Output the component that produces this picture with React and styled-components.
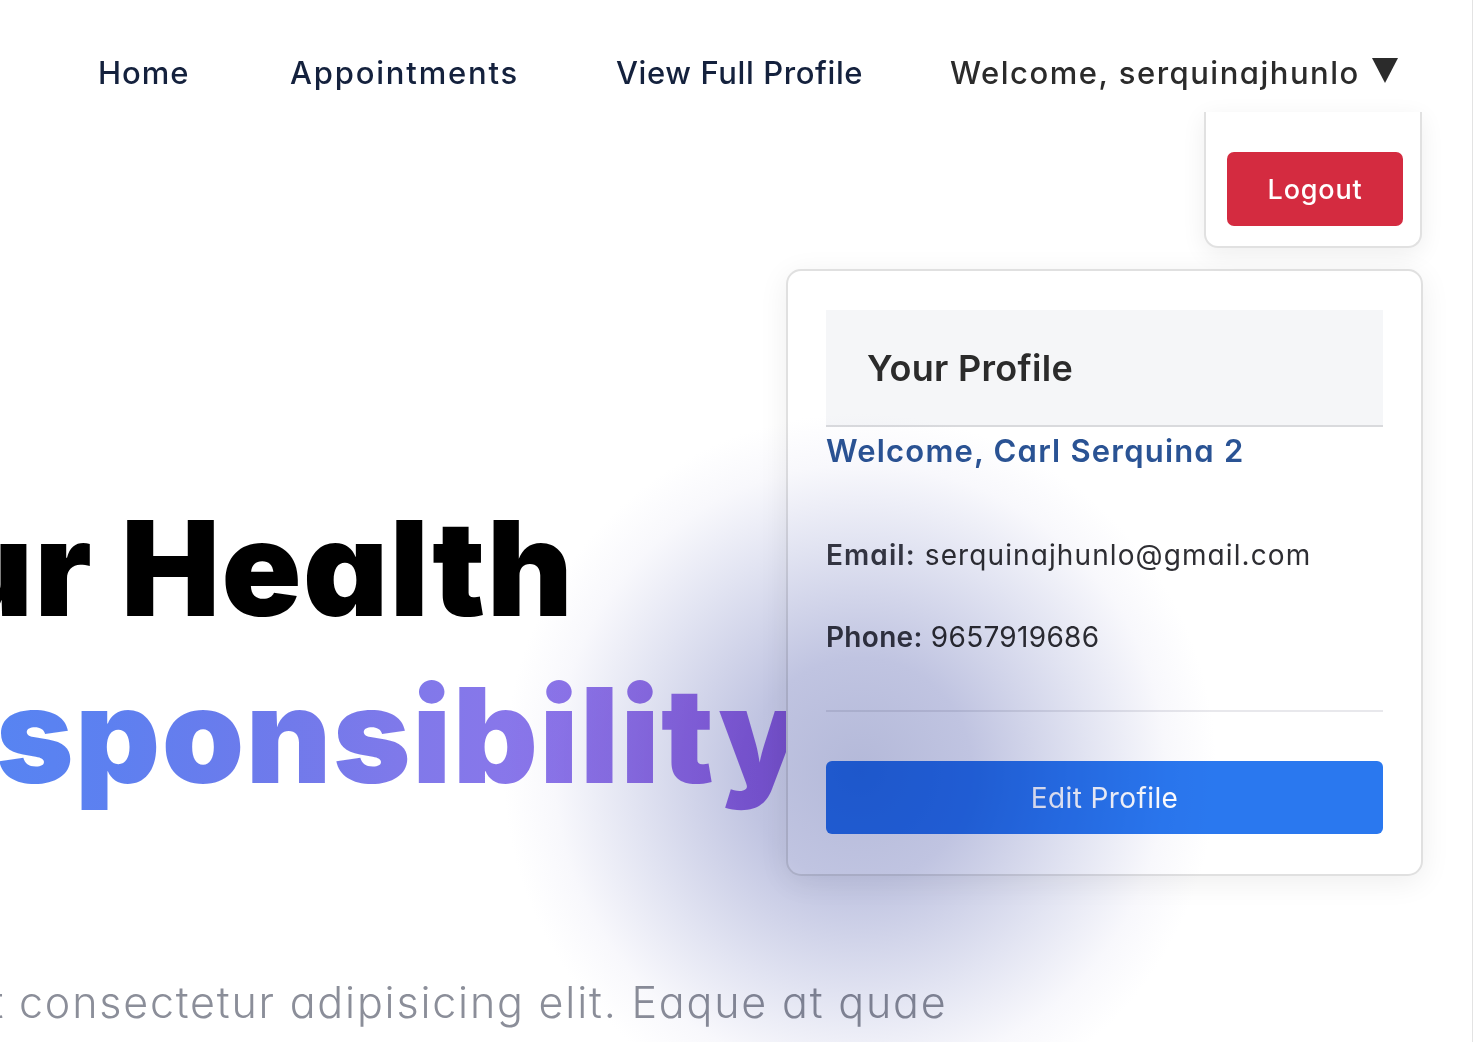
import React from "react";
import styled, { createGlobalStyle } from "styled-components";

const GlobalStyle = createGlobalStyle`
  html, body {
    margin: 0;
    padding: 0;
    background: #ffffff;
  }
  body {
    font-family: Inter, "Noto Sans", "Liberation Sans", sans-serif;
    font-feature-settings: "cv11" 1;
    overflow: hidden;
  }
  * { box-sizing: border-box; }
`;

const Frame = styled.div`
  position: relative;
  width: 1473px;
  height: 1042px;
  border-right: 1px solid #e3e3e3;
  background: #ffffff;
  overflow: hidden;
`;

const Header = styled.header`
  position: relative;
  z-index: 3;
  height: 112px;
  padding-top: 32px;
  display: flex;
  align-items: center;
  background: #ffffff;
`;

const Nav = styled.nav`
  display: grid;
  grid-template-columns: 192px 326px 334px auto;
  align-items: center;
  padding-left: 98px;
`;

const NavLink = styled.a`
  font-size: 31px;
  font-weight: 500;
  color: #14213d;
  text-decoration: none;
  white-space: nowrap;
  letter-spacing: ${(p) => p.$spacing ?? 1}px;
`;

const UserToggle = styled.button`
  display: flex;
  align-items: center;
  gap: 12px;
  padding: 0;
  border: 0;
  background: none;
  font-family: inherit;
  font-feature-settings: inherit;
  font-size: 31px;
  font-weight: 500;
  color: #2b2b2b;
  white-space: nowrap;
  letter-spacing: 1.5px;
  cursor: pointer;
`;

const Caret = styled.svg`
  width: 26px;
  height: 26px;
  margin-top: -4px;
  fill: #2b2b2b;
`;

const Dropdown = styled.div`
  position: absolute;
  top: 100%;
  right: 50px;
  width: 218px;
  padding: 40px 20px 20px 21px;
  background: #ffffff;
  border: 2px solid #e1e1e1;
  border-top: 0;
  border-radius: 0 0 14px 14px;
  box-shadow: 0 6px 24px rgba(0, 0, 0, 0.07);
`;

const LogoutButton = styled.button`
  display: block;
  width: 176px;
  height: 74px;
  border: 0;
  border-radius: 7px;
  background: #d42b40;
  color: #ffffff;
  font-family: inherit;
  font-feature-settings: inherit;
  font-size: 27px;
  font-weight: 500;
  letter-spacing: 0.8px;
  cursor: pointer;
`;

const Main = styled.main`
  display: grid;
  grid-template-columns: 786px 637px;
`;

const Hero = styled.section`
  position: relative;
  z-index: 1;
  min-width: 0;
  padding-top: 373px;
  white-space: nowrap;
`;

const Title = styled.h1`
  margin: 0;
  font-size: 132px;
  font-weight: 900;
  line-height: 167px;
  letter-spacing: 1.5px;
`;

const TitleLine = styled.span`
  display: flex;
  color: #000000;
`;

const Lead = styled.span`
  flex: 0 0 ${(p) => p.$x}px;
  min-width: 0;
  display: flex;
  justify-content: flex-end;
  white-space: pre;
`;

const GradientText = styled.span`
  margin-left: -4px;
  background: linear-gradient(
    90deg,
    #5784f2 0%,
    #5d80f0 14%,
    #6f7aeb 35%,
    #8079ea 51%,
    #8a76ea 66%,
    #9473e8 79%,
    #9a6ce8 89%,
    #9a66e4 100%
  );
  -webkit-background-clip: text;
  background-clip: text;
  color: transparent;
`;

const Lorem = styled.p`
  display: flex;
  margin: 155px 0 0;
  font-size: 43px;
  font-weight: 300;
  line-height: 57px;
  letter-spacing: 1.8px;
  color: #8b8e99;
`;

const Aside = styled.aside`
  position: relative;
  z-index: 2;
  padding-top: 157px;
`;

const Card = styled.div`
  display: flex;
  flex-direction: column;
  padding: 39px 38px 40px;
  background: #ffffff;
  border: 2px solid #e0e0e0;
  border-radius: 15px;
  box-shadow: 0 6px 30px rgba(0, 0, 0, 0.07);
`;

const CardHead = styled.div`
  height: 117px;
  display: flex;
  align-items: center;
  padding-left: 41px;
  background: #f5f6f8;
  border-bottom: 2px solid #d9dadd;
`;

const CardTitle = styled.h2`
  margin: 0;
  font-size: 36px;
  font-weight: 600;
  letter-spacing: 0.3px;
  color: #2b2b2b;
`;

const Greeting = styled.h3`
  margin: 0;
  font-size: 31px;
  font-weight: 600;
  line-height: 48px;
  letter-spacing: 1.2px;
  color: #2a5394;
`;

const InfoRow = styled.p`
  margin: ${(p) => p.$top}px 0 0;
  font-size: 28px;
  line-height: 40px;
  letter-spacing: ${(p) => p.$spacing}px;
  color: #2e2e33;
`;

const Label = styled.strong`
  font-weight: 600;
  color: #3a3b45;
`;

const Divider = styled.hr`
  margin: 53px 0 0;
  height: 2px;
  border: 0;
  background: #e8e8ec;
`;

const EditButton = styled.button`
  margin-top: 49px;
  height: 73px;
  border: 0;
  border-radius: 6px;
  background: #2a78ef;
  color: #ffffff;
  font-family: inherit;
  font-feature-settings: inherit;
  font-size: 28px;
  font-weight: 400;
  letter-spacing: 0.4px;
  cursor: pointer;
`;

const Glow = styled.div`
  position: absolute;
  left: 500px;
  top: 410px;
  width: 720px;
  height: 720px;
  border-radius: 50%;
  background: radial-gradient(
    circle at center,
    rgb(180, 185, 217) 0%,
    rgb(192, 196, 225) 22%,
    rgb(226, 228, 242) 45%,
    rgb(248, 248, 252) 60%,
    rgba(255, 255, 255, 1) 70%
  );
  mix-blend-mode: multiply;
  pointer-events: none;
  z-index: 5;
`;

export default function App() {
  return (
    <>
      <GlobalStyle />
      <Frame>
        <Header>
          <Nav>
            <NavLink href="#">Home</NavLink>
            <NavLink href="#" $spacing={1.8}>Appointments</NavLink>
            <NavLink href="#" $spacing={0.6}>View Full Profile</NavLink>
            <UserToggle type="button">
              Welcome, serquinajhunlo
              <Caret viewBox="0 0 26 26" aria-hidden="true">
                <polygon points="0,1 26,1 13,26" />
              </Caret>
            </UserToggle>
          </Nav>
          <Dropdown>
            <LogoutButton type="button">Logout</LogoutButton>
          </Dropdown>
        </Header>
        <Main>
          <Hero>
            <Title>
              <TitleLine>
                <Lead $x={121}>Your </Lead>
                <span>Health</span>
              </TitleLine>
              <TitleLine>
                <Lead $x={0}>Re</Lead>
                <GradientText>sponsibility</GradientText>
              </TitleLine>
            </Title>
            <Lorem>
              <Lead $x={19}>Lorem ipsum dolor sit amet </Lead>
              <span>consectetur adipisicing elit. Eaque at quae</span>
            </Lorem>
          </Hero>
          <Aside>
            <Card>
              <CardHead>
                <CardTitle>Your Profile</CardTitle>
              </CardHead>
              <Greeting>Welcome, Carl Serquina 2</Greeting>
              <InfoRow $top={60} $spacing={1.1}>
                <Label>Email:</Label> serquinajhunlo@gmail.com
              </InfoRow>
              <InfoRow $top={42} $spacing={0.3}>
                <Label>Phone:</Label> 9657919686
              </InfoRow>
              <Divider />
              <EditButton type="button">Edit Profile</EditButton>
            </Card>
          </Aside>
        </Main>
        <Glow />
      </Frame>
    </>
  );
}
